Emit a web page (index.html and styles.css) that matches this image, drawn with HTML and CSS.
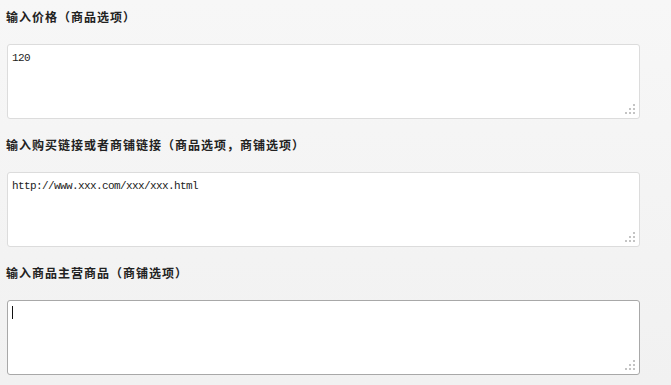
FILE: index.html
```html
<!DOCTYPE html>
<html lang="zh-CN">

<head>
  <meta charset="utf-8" />
  <meta name="viewport" content="width=device-width, initial-scale=1" />
  <title>商品选项</title>
  <link rel="stylesheet" href="styles.css">
</head>

<body>
  <div class="form">
    <div class="field">
      <label class="field-label" for="price">输入价格（商品选项）</label>
      <div class="box">
        <textarea id="price" class="input">120</textarea>
        <span class="grip"></span>
      </div>
    </div>
    <div class="field">
      <label class="field-label" for="link">输入购买链接或者商铺链接（商品选项，商铺选项）</label>
      <div class="box">
        <textarea id="link" class="input">http://www.xxx.com/xxx/xxx.html</textarea>
        <span class="grip"></span>
      </div>
    </div>
    <div class="field">
      <label class="field-label" for="main">输入商品主营商品（商铺选项）</label>
      <div class="box">
        <textarea id="main" class="input input-active"></textarea>
        <span class="caret"></span>
        <span class="grip"></span>
      </div>
    </div>
  </div>
</body>

</html>
```

FILE: styles.css
```css
html,
body {
  margin: 0;
  padding: 0;
}

body {
  background: linear-gradient(#f7f7f7, #f1f1f1);
  min-height: 385px;
  font-family: "Noto Sans CJK SC", sans-serif;
  color: #222;
}

.form {
  padding: 0 7px;
}

.field {
  padding: 10px 0 9px;
}

.field-label {
  display: block;
  height: 14px;
  line-height: 14px;
  margin: 0 0 20px -1px;
  font-size: 12px;
  font-weight: bold;
  letter-spacing: 1px;
  color: #222;
}

.box {
  position: relative;
  width: 633px;
  height: 75px;
}

.input {
  display: block;
  box-sizing: border-box;
  width: 633px;
  height: 75px;
  margin: 0;
  padding: 6px 4px;
  border: 1px solid #dcdcdc;
  border-radius: 3px;
  background: #fff;
  resize: none;
  outline: none;
  font-family: "Liberation Mono", monospace;
  font-size: 11px;
  letter-spacing: -0.6px;
  line-height: 14px;
  color: #222;
}

.input-active {
  border-color: #a8a8a8;
}

.caret {
  position: absolute;
  left: 5px;
  top: 6px;
  width: 1px;
  height: 13px;
  background: #111;
}

.grip {
  position: absolute;
  right: 5px;
  bottom: 5px;
  width: 2px;
  height: 2px;
  background: #c4c4c4;
  box-shadow: -4px 0 #c4c4c4, -8px 0 #c4c4c4, 0 -4px #c4c4c4, -4px -4px #c4c4c4, 0 -8px #c4c4c4;
}
```
